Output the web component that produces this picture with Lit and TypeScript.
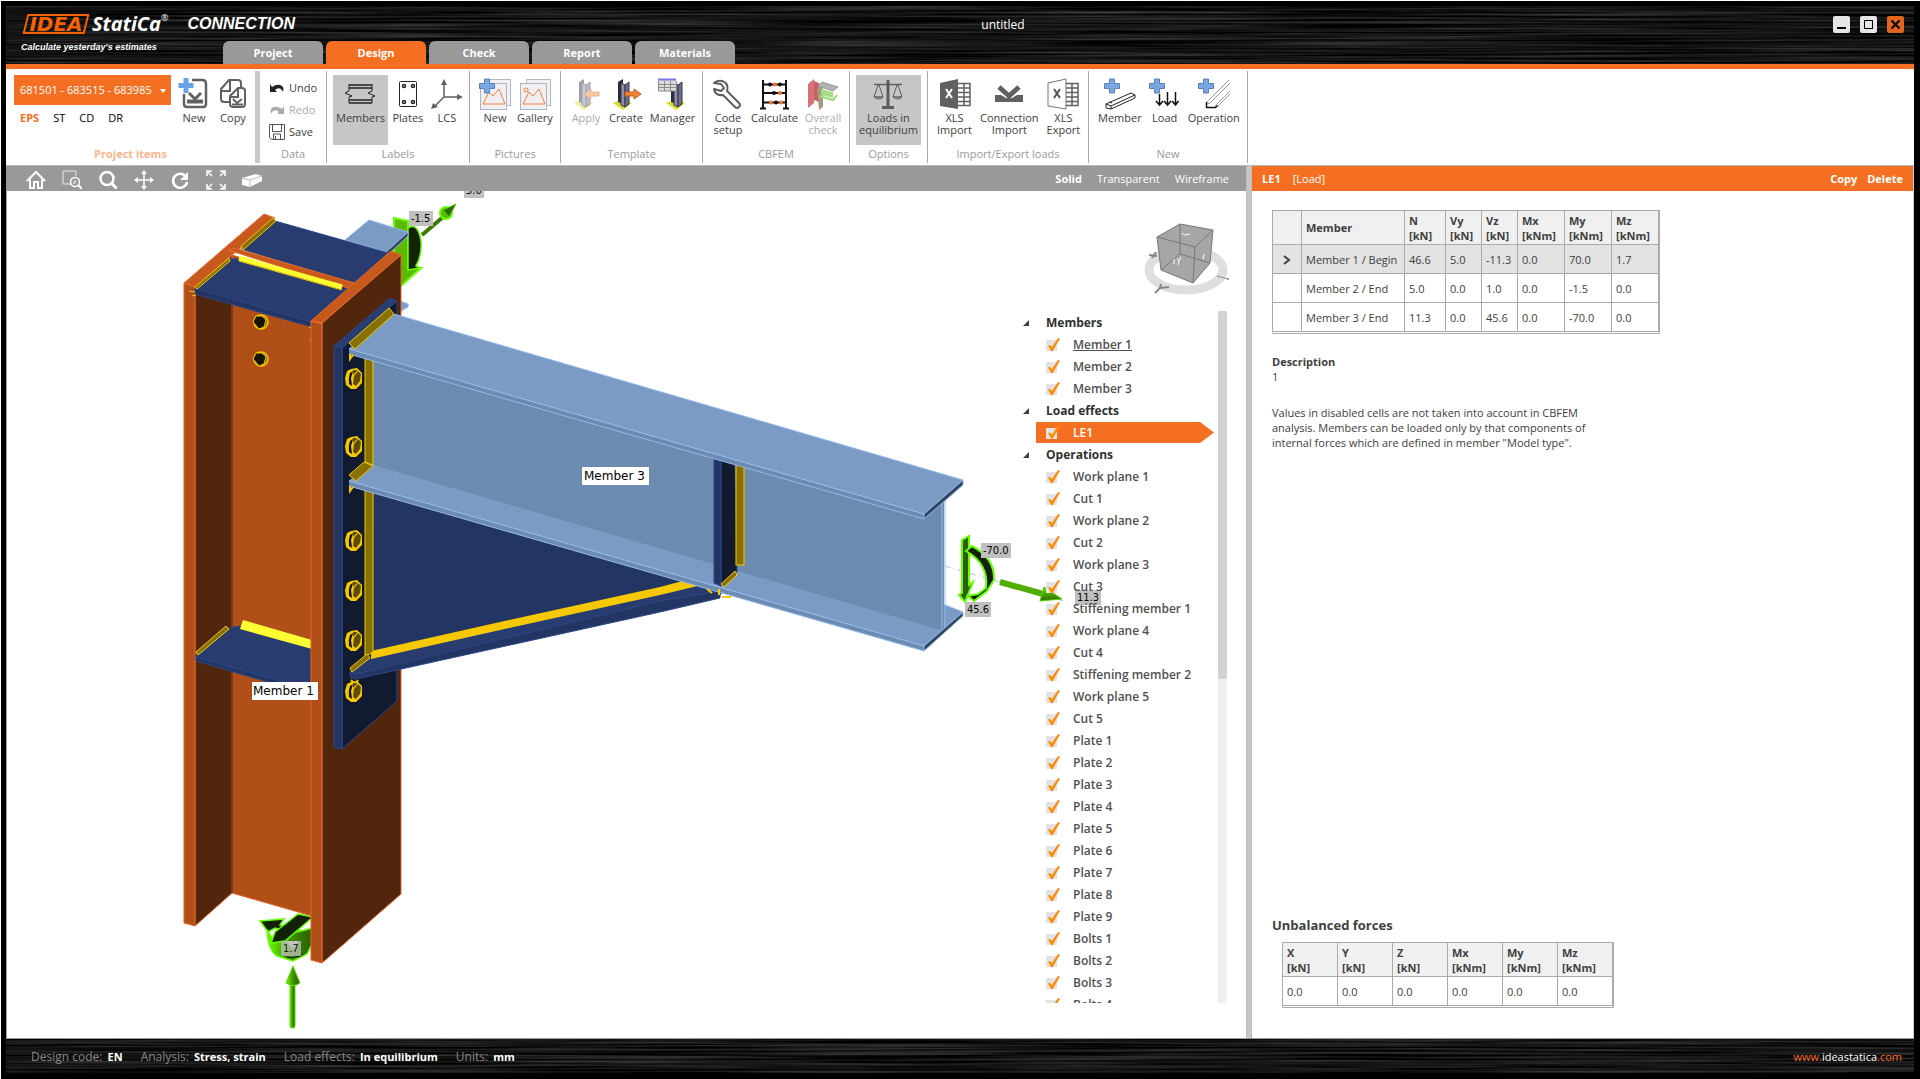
import { LitElement, html, svg, css, nothing, TemplateResult } from "lit";
import { customElement, state } from "lit/decorators.js";
import { classMap } from "lit/directives/class-map.js";

type Icon = TemplateResult;

const icon = (body: unknown, w = 32, h = 32): Icon =>
  html`<svg width=${w} height=${h} viewBox="0 0 ${w} ${h}" fill="none" aria-hidden="true">${body}</svg>`;

const bluePlus = svg`<path d="M5.500 1h5v4.500h5v5h-5v4.500h-5v-4.500h-5v-5h5z" fill="#7aa7df" stroke="#5580bd"/>`;
const column = svg`
  <path d="M8 25l10-4 9 4-9 7z" fill="#d8dc30"/>
  <path d="M13 4l5-3v25l-5-2z" fill="#2a2c3c"/>
  <path d="M16 5l4 2v22l-4-2z" fill="#8d8fa8" stroke="#34364a"/>
  <path d="M20 7l4-3v22l-4 3z" fill="#6c6e8a" stroke="#34364a"/>`;
const picture = svg`
  <rect x="7.500" y="1.500" width="24" height="26" fill="#f2f2f4" stroke="#b4b8c4"/>
  <rect x="1.500" y="5.500" width="26" height="26" fill="#f0f0f2" stroke="#aeb4c2"/>
  <path d="M4 26l6-12 4 4 6-7 6 15z" stroke="#f5803c"/>`;
const grid = svg`<path d="M19 5.500h12v22h-12M19 10h12M19 14.500h12M19 19h12M19 23.500h12M25 5v22" stroke="#606060" stroke-width="1.500"/>`;

const icons: Record<string, Icon> = {
  projectNew: icon(svg`
    <path d="M14 2h10q4 0 4 4v20q0 3-3 3H9q-3 0-3-3V16" stroke="#606060" stroke-width="2.500"/>
    <path d="M9 23.500h16" stroke="#606060" stroke-width="4"/><path d="M11 15l6 6 6-6" stroke="#606060" stroke-width="3"/>
    <path d="M5.500 0h5v5h5v5h-5v5h-5v-5h-5v-5h5z" fill="#6aa2e8"/>`),
  projectCopy: icon(svg`
    <path d="M13 24H7q-3 0-3-3V11l8-9h9q3 0 3 3v4M4 13h9V2" stroke="#606060" stroke-width="2"/>
    <path d="M21 10h4q3 0 3 3v13q0 3-3 3H16q-3 0-3-3v-8zM13 19h8v-9" stroke="#606060" stroke-width="2"/>
    <path d="M15 26.500h11M16 21l4 4 5-4" stroke="#606060" stroke-width="2"/>`),
  members: icon(svg`
    <path d="M5 7h23M5 10h23M5 22h23M5 25h23" stroke="#222" stroke-width="1.500"/>
    <path d="M5 6v7l-4 2 7 3-3 1v6M28 6v7l-4 2 7 3-3 1v6" stroke="#222"/>`),
  plates: icon(svg`
    <rect x="7.500" y="3.500" width="17" height="25" stroke="#222" rx="1"/>
    <g stroke="#222" stroke-width="1.500"><circle cx="12" cy="8" r="1.500"/><circle cx="21" cy="8" r="1.500"/><circle cx="12" cy="24" r="1.500"/><circle cx="21" cy="24" r="1.500"/></g>`),
  lcs: icon(svg`
    <path d="M13 5v14h14M13 19L4 28" stroke="#606060" stroke-width="1.500"/>
    <path d="M10 7l3-6 3 6zM26 16l6 3-6 3zM2 25l5 4-7 2z" fill="#606060"/>`),
  pictureNew: icon(svg`${picture}${bluePlus}`),
  gallery: icon(svg`${picture}<circle cx="7" cy="12" r="2" stroke="#f5803c"/>`),
  apply: icon(svg`<g opacity=".45"><g transform="translate(-4 0)">${column}</g><path d="M29 14v4h-8v3l-7-5 7-5v3z" fill="#f58030" stroke="#c05a20"/></g>`),
  create: icon(svg`<g transform="translate(-5 0)">${column}</g><path d="M15 14v4h9v3l7-5-7-5v3z" fill="#f08438" stroke="#c05a20"/>`),
  manager: icon(svg`<g transform="translate(1 0)">${column}</g>
    <rect x="1" y="1" width="18" height="12" fill="#ddd"/>
    <path d="M1 1.500h18" stroke="#7a78e0" stroke-width="2"/><path d="M1.500 3v10h18V3M1 6.500h18M1 9.500h18M7.500 3v10M13.500 3v10" stroke="#8a8a8a"/>`),
  wrench: icon(svg`<path d="M2 4l7 1 3 4-3 3-7-2q1 7 9 6l12 12q2 2 4 0t0-4L15 12q2-8-5-10-5-1-8 2z" stroke="#5e5e5e" stroke-width="2" stroke-linejoin="round" transform="translate(0 1)"/>`),
  abacus: icon(svg`
    <path d="M5 2v29M28 2v29M2 30.500h6M25 30.500h6M5 6.500h23M5 15h23M5 24.500h23" stroke="#111" stroke-width="2"/>
    <g fill="#111"><circle cx="12" cy="6.500" r="2"/><circle cx="22" cy="6.500" r="2"/><circle cx="16" cy="15" r="2"/><circle cx="18" cy="24.500" r="2"/></g>
    <g fill="#f56f22"><circle cx="17" cy="6.500" r="2"/><circle cx="22" cy="15" r="2"/><circle cx="13" cy="24.500" r="2"/><circle cx="23" cy="24.500" r="2"/></g>`),
  overall: icon(svg`
    <path d="M1 6l6-5v24l-6 5z" fill="#d87078"/><path d="M7 3l5 2v19l-5-2z" fill="#c86068"/>
    <path d="M10 10l6-3v22l-4 3z" fill="#a89880"/>
    <path d="M11 8l4-4 16 5-5 4z" fill="#b0b4b0" stroke="#989c98"/><path d="M14 11l12 3v6l-12-3z" fill="#a8dc88"/><path d="M12 18l14 4 4-5" stroke="#98d870" stroke-width="2"/>`),
  scale: icon(svg`
    <path d="M2 6.500h28" stroke="#5c5c5c" stroke-width="1.500"/><path d="M16 2v27" stroke="#5c5c5c" stroke-width="3"/><path d="M10 29.500h12" stroke="#5c5c5c" stroke-width="3"/>
    <path d="M6 7l-4 12h9L7 7M25 7l-4 12h9L26 7" stroke="#5c5c5c"/><path d="M2 19h9q-4 4-9 0zM21 19h9q-4 4-9 0z" stroke="#5c5c5c" fill="#aaa"/>`),
  xlsImport: icon(svg`<path d="M1 5l18-4v30L1 28z" fill="#606060"/>${grid}<path d="M7 11l6 9M13 11l-6 9" stroke="#fff" stroke-width="2"/>`),
  connImport: icon(svg`<path d="M2 17h6l5 3h6l5-3h6v7H2z" fill="#606060"/><path d="M6 9l10 9 10-9" stroke="#606060" stroke-width="5"/>`),
  xlsExport: icon(svg`<path d="M1 5l18-4v30L1 28z" stroke="#777" fill="#fff"/>${grid}<path d="M7 11l6 9M13 11l-6 9" stroke="#555" stroke-width="2"/>`),
  addMember: icon(svg`${bluePlus}<path d="M2 26l25-11 4 2v3L7 31l-5-1zM2 26l5 2 24-11M7 28v3M5 24l3 1" stroke="#222"/>`),
  addLoad: icon(svg`${bluePlus}<path d="M10.500 16v11M18.500 14v13M26.500 14v13M7 23l3.500 4 3.500-4M15 23l3.500 4 3.500-4M23 23l3.500 4 3-4" stroke="#111" stroke-width="1.500"/>`),
  addOperation: icon(svg`${bluePlus}<path d="M9 24L31 2M9 26l3-1L32 5M19 29l13-13M17 28l15-15" stroke="#999"/><path d="M8.500 24v5.500h9l2-2" stroke="#111" stroke-width="1.500"/>`),
  undo: icon(svg`<path d="M1 4v8h7L6 10q3-3 6-1 2 2 1 3 3-3 0-6Q9 3 3 7z" fill="#222"/>`, 16, 16),
  redo: icon(svg`<path d="M15 4v8H8l2-2q-3-3-6-1-2 2-1 3-3-3 0-6 4-3 10 1z" fill="#aaa"/>`, 16, 16),
  save: icon(svg`<path d="M.5.500h15v15H3l-2.500-2zM3.500.500v7h9v-7M4.500 15v-5h7v5M6.500 12v3" stroke="#555"/>`, 16, 16),
};

const viewTools: { label: string; icon: Icon }[] = [
  { label: "Home", icon: icon(svg`<path d="M1 11L10 2l9 9M4 9v9h4v-6h4v6h4V9" stroke="#fff" stroke-width="2"/>`, 20, 20) },
  { label: "Zoom window", icon: icon(svg`<path d="M10 14H1V1h13v5" stroke="#e8e8e8"/><circle cx="13" cy="12" r="4.500" stroke="#fff" stroke-width="1.500"/><path d="M16 15l4 4" stroke="#fff" stroke-width="2"/><path d="M13 10v3h-2" stroke="#fff"/>`, 20, 20) },
  { label: "Zoom", icon: icon(svg`<circle cx="9" cy="8.500" r="6.500" stroke="#fff" stroke-width="2.500"/><path d="M13.500 13l5 5.500" stroke="#fff" stroke-width="3"/>`, 20, 20) },
  { label: "Pan", icon: icon(svg`<path d="M10 2v16M2 10h16" stroke="#fff" stroke-width="1.500"/><path d="M7 4l3-4 3 4zM7 16l3 4 3-4zM4 7l-4 3 4 3zM16 7l4 3-4 3z" fill="#fff"/>`, 20, 20) },
  { label: "Rotate", icon: icon(svg`<path d="M16 7a7 7 0 1 0 1 5" stroke="#fff" stroke-width="2.500"/><path d="M18 2v8h-8z" fill="#fff"/>`, 20, 20) },
  { label: "Fit", icon: icon(svg`<path d="M1 6V1h5M1 1l5 5M14 1h5v5M19 1l-5 5M1 14v5h5M1 19l5-5M14 19h5v-5M19 19l-5-5" stroke="#fff" stroke-width="1.500"/>`, 20, 20) },
  { label: "Clipping box", icon: icon(svg`<path d="M0 8l14-4 6 2v5L8 17l-8-2z" fill="#fff"/><path d="M0 8l8 2 12-4M8 10v7" stroke="#bbb"/>`, 20, 20) },
];

interface Tool { label: string; icon: string; active?: boolean; disabled?: boolean }
interface Group { title: string; size: string; tools: Tool[] }

const groups: Group[] = [
  { title: "Labels", size: "w-labels", tools: [{ label: "Members", icon: "members", active: true }, { label: "Plates", icon: "plates" }, { label: "LCS", icon: "lcs" }] },
  { title: "Pictures", size: "w-pictures", tools: [{ label: "New", icon: "pictureNew" }, { label: "Gallery", icon: "gallery" }] },
  { title: "Template", size: "w-template", tools: [{ label: "Apply", icon: "apply", disabled: true }, { label: "Create", icon: "create" }, { label: "Manager", icon: "manager" }] },
  { title: "CBFEM", size: "w-cbfem", tools: [{ label: "Code setup", icon: "wrench" }, { label: "Calculate", icon: "abacus" }, { label: "Overall check", icon: "overall", disabled: true }] },
  { title: "Options", size: "w-options", tools: [{ label: "Loads in equilibrium", icon: "scale", active: true }] },
  { title: "Import/Export loads", size: "w-loads", tools: [{ label: "XLS Import", icon: "xlsImport" }, { label: "Connection Import", icon: "connImport" }, { label: "XLS Export", icon: "xlsExport" }] },
  { title: "New", size: "w-new", tools: [{ label: "Member", icon: "addMember" }, { label: "Load", icon: "addLoad" }, { label: "Operation", icon: "addOperation" }] },
];

const tree = [
  { title: "Members", items: ["Member 1", "Member 2", "Member 3"] },
  { title: "Load effects", items: ["LE1"] },
  {
    title: "Operations",
    items: [
      "Work plane 1", "Cut 1", "Work plane 2", "Cut 2", "Work plane 3", "Cut 3", "Stiffening member 1",
      "Work plane 4", "Cut 4", "Stiffening member 2", "Work plane 5", "Cut 5", "Plate 1", "Plate 2", "Plate 3",
      "Plate 4", "Plate 5", "Plate 6", "Plate 7", "Plate 8", "Plate 9", "Bolts 1", "Bolts 2", "Bolts 3", "Bolts 4",
    ],
  },
];

const loads = [
  ["Member 1 / Begin", "46.6", "5.0", "-11.3", "0.0", "70.0", "1.7"],
  ["Member 2 / End", "5.0", "0.0", "1.0", "0.0", "-1.5", "0.0"],
  ["Member 3 / End", "11.3", "0.0", "45.6", "0.0", "-70.0", "0.0"],
];
const loadHeads = [["N", "kN"], ["Vy", "kN"], ["Vz", "kN"], ["Mx", "kNm"], ["My", "kNm"], ["Mz", "kNm"]];
const sumHeads = [["X", "kN"], ["Y", "kN"], ["Z", "kN"], ["Mx", "kNm"], ["My", "kNm"], ["Mz", "kNm"]];

/** Horizontal brushed-metal texture behind the title and status bars. */
const brushed = (seed: number) => html`
  <svg class="brushed" aria-hidden="true" width="100%" height="100%">
    <filter id="brush${seed}" x="0" y="0" width="100%" height="100%" color-interpolation-filters="sRGB">
      <feTurbulence type="fractalNoise" baseFrequency="0.004 0.5" numOctaves="3" seed=${seed} />
      <feColorMatrix values="0.4 0 0 0 -0.12  0.4 0 0 0 -0.12  0.4 0 0 0 -0.12  0 0 0 0 1" />
    </filter>
    <rect width="100%" height="100%" filter="url(#brush${seed})" />
  </svg>`;

@customElement("scene-view")
class SceneView extends LitElement {
  static styles = css`
    :host { display: block; overflow: hidden; }
    svg { display: block; width: 100%; height: 100%; }
    .o { fill: #b04f18; stroke: #e0672a; }
    .ot { fill: #c8591c; stroke: #e8692a; }
    .od { fill: #52260d; stroke: #e0672a; }
    .n { fill: #293c70; stroke: #2c4788; }
    .nf { fill: #233563; stroke: #2c4788; }
    .nd { fill: #121a30; stroke: #2c4788; }
    .b { fill: #7b9bc5; stroke: #94b8f0; }
    .bw { fill: #6d8bae; stroke: none; }
    .bd { fill: #34465c; stroke: #94b8f0; }
    .bl { fill: none; stroke: #94b8f0; }
    .y { fill: #f5c800; }
    .yy { fill: #ffff32; }
    .yd { fill: #857000; stroke: #f5c800; }
    .g { fill: #5cb800; stroke: #66ff00; stroke-width: 2; }
    .gm { fill: #2f5f00; stroke: #66ff00; stroke-width: 2; }
    .gd { fill: #142204; stroke: #66ff00; stroke-width: 1.500; }
    .tag { fill: #c0c0c0; }
    .val { font: 11px "DejaVu Sans Condensed", "DejaVu Sans", sans-serif; fill: #000; }
    .name { font: 12px "DejaVu Sans", sans-serif; fill: #000; }
  `;

  private bolt(y: number) {
    return svg`<g transform="translate(354 ${y})">
      <path d="M-3-10L3-11 8-6 8 4 2 10-3 10-8 6-9-1-7-8z" fill="#f5c800"/>
      <path d="M-4-6L-1-8l-2 7 1 8-3-2q-1-6 1-11z" fill="#15120a"/>
      <path d="M0-3l4-5 3 3-1 7-4 5-3-2z" fill="#5c4d00"/>
      <path d="M-1-9l4 0 0 1-4 4z" fill="#5c4d00"/></g>`;
  }
  private nut(y: number) {
    return svg`<g transform="translate(260 ${y})"><ellipse cx="1" rx="7" ry="7" fill="#857000" stroke="#f5c800" stroke-width="1.500"/>
      <path d="M-7 0l3-6h6l4 4-2 7-5 2z" fill="#181400" stroke="#f5c800"/></g>`;
  }
  private tag(x: number, y: number, w: number, t: string) {
    return svg`<rect class="tag" x=${x} y=${y} width=${w} height="15"/><text class="val" x=${x + 2} y=${y + 11}>${t}</text>`;
  }

  render() {
    return html`<svg viewBox="7 191 1239 847" preserveAspectRatio="xMinYMin slice" role="img" aria-label="Steel joint model">
      <defs>
        <linearGradient id="gv" x1="0" x2="1"><stop offset="0" stop-color="#66ff00"/><stop offset=".5" stop-color="#3f9000"/><stop offset="1" stop-color="#2c5a00"/></linearGradient>
        <linearGradient id="gh" x1="0" x2="0" y2="1"><stop offset="0" stop-color="#66e000"/><stop offset="1" stop-color="#2f6a00"/></linearGradient>
      </defs>

      <polygon class="g" points="394,218 408,221 408,268 421,268 402,285 394,290"/>
      <path class="gd" d="M408 228Q418 222 421 241 422 256 416 266L420 268 408 270z"/>
      <path d="M422 235L443 217" stroke="#3c7c00" stroke-width="4"/>
      <ellipse class="g" cx="446" cy="213" rx="6" ry="6"/>
      <polygon points="456,204 443,210 449,217" fill="#2f6a00" stroke="#55d000"/>
      <polygon class="b" points="345,240 369,220 408,232 386,252"/>
      <polygon class="bd" points="408,232 408,236 389,254 386,252"/>
      <polygon class="b" points="400,301 408,304 408,307 400,312"/>
      <polygon class="bd" points="408,304 408,306 401,311"/>
      ${this.tag(409, 211, 24, "-1.5")}
      ${this.tag(464, 183, 20, "5.0")}

      <polygon class="gd" points="260,921 284,919 280,925 313,934 313,940 275,928 268,932"/>
      <path d="M267 930Q268 950 277 956L293 961 307 954 313 942V928L293 933 275 943z" fill="url(#gv)" stroke="#66ff00" stroke-width="1.500"/>
      <path d="M281 955Q292 960 305 953L300 957 288 958z" fill="#142204"/>
      <polygon class="gd" points="298,914 313,917 285,941 271,943 275,932"/>
      <polygon points="285,941 299,941 293,949" fill="#ddd" opacity=".8"/>
      <g opacity=".75">${this.tag(281, 941, 20, "1.7")}</g>
      <rect x="290" y="984" width="5" height="44" rx="2" fill="url(#gv)" stroke="#5ae000"/>
      <path d="M293 966l7 17q-7 5-14 0z" fill="url(#gv)" stroke="#5ae000"/>

      <polygon class="od" points="195,287 232,255 232,893 195,926"/>
      <polygon class="o" points="232,255 312,280 312,916 232,893"/>
      <path d="M232 300V893" stroke="#3c1c0a"/>
      <polygon class="o" points="184,283 195,287 195,926 184,923"/>
      <polygon class="ot" points="184,283 264,214 275,218 195,287"/>
      <polygon class="n" points="275,221 388,253 355,284 241,249"/>
      <polygon class="n" points="195,288 230,259 238,259 352,288 312,322"/>
      <polygon class="ot" points="228,250 234,248 358,284 351,289"/>
      <polygon class="nf" points="195,288 312,322 312,327 195,294"/>
      <path d="M239 258L342 287" stroke="#ffff32" stroke-width="5"/>
      <path d="M239 261L342 290" stroke="#f5c800"/>
      <polygon class="yd" points="241,246 273,218 276,221 243,250"/>
      <polygon class="yd" points="195,287 229,258 230,261 197,289"/>
      <path d="M189 291l6 1M192 296l4-1M311 323l6 3M309 327l4 2M311 338v3M311 375v2" stroke="#f5c800"/>
      ${this.nut(322)}${this.nut(359)}
      <polygon class="n" points="196,655 228,628 240,626 312,648 312,690 196,657"/>
      <polygon class="nf" points="196,657 312,690 312,695 196,661"/>
      <polygon class="yd" points="196,652 226,626 229,629 198,655"/>
      <polygon class="yy" points="243,620 312,640 312,649 240,629"/>
      <polygon class="od" points="322,323 401,254 401,894 322,963"/>
      <polygon class="o" points="311,321 322,324 322,963 311,960"/>
      <polygon class="ot" points="311,321 391,251 401,255 322,323"/>

      <polygon class="nd" points="342,348 397,301 397,701 342,749"/>
      <polygon class="nf" points="334,346 342,348 342,749 334,747"/>
      <polygon class="n" points="334,346 390,298 397,301 342,348"/>

      <polygon class="nf" points="373,485 720,585 704,586 371,655"/>
      <polygon class="n" points="350,673 371,658 500,630 690,584 722,592 720,595 660,602 356,675"/>
      <polygon class="nf" points="350,671 356,674 660,601 720,591 720,598 660,612 356,679 350,677"/>
      <polygon class="y" points="371,651 500,622 660,587 690,579 706,584 660,595 500,630 371,659"/>
      <polygon class="yd" points="365,485 373,488 373,652 365,657"/>
      <polygon class="yd" points="350,668 367,654 370,658 352,672"/>

      <polygon class="b" points="349,481 373,465 945,605 963,612 924,646"/>
      <polygon class="bw" points="373,350 944,498 944,631 373,465"/>
      <path class="bl" d="M942 500V631M945 497V630"/>
      <polygon class="bw" points="349,481 924,646 924,651 349,486"/>
      <path class="bl" d="M349 481L924 646M349 486L924 651"/>
      <polygon class="bd" points="924,646 963,612 963,616 924,651"/>
      <polygon class="yd" points="365,357 373,355 373,465 365,462"/>

      <polygon class="nd" points="721,460 735,464 737,572 721,586"/>
      <polygon class="nf" points="714,458 721,460 721,586 714,583"/>
      <rect class="yd" x="736" y="464" width="8" height="101"/>
      <polygon class="yd" points="721,584 735,571 737,575 724,587"/>
      <path d="M707 589l5 4M719 589v6M722 597h9" stroke="#f5c800" stroke-width="2"/>

      <polygon class="b" points="394,314 963,480 924,514 349,349"/>
      <polygon class="bw" points="349,349 924,514 924,519 349,354"/>
      <path class="bl" d="M349 349L924 514M349 354L924 519"/>
      <polygon class="bd" points="924,514 963,480 963,485 924,519"/>
      <polygon class="yd" points="349,343 389,308 394,314 355,349"/>
      <polygon class="yd" points="349,475 364,462 373,466 356,481"/>
      <path d="M350 354v5l3-4M350 486v5l3-4M351 680l4 4 3-4" stroke="#f5c800" stroke-width="2" fill="none"/>
      ${[379, 447, 541, 591, 641, 692].map((y) => this.bolt(y))}

      <path d="M945 566L1064 601" stroke="#a8c0e0" stroke-dasharray="6 3 1 3"/>
      <polygon class="gm" points="962,540 969,536 969,585 973,582 965,602 959,595 962,593"/>
      <path d="M972 546Q995 558 994 580L987 591 974 601 968 596 978 594 986 588Q989 564 966 551z" fill="#142204" stroke="#66ff00" stroke-width="2"/>
      <path d="M1000 582L1043 594" stroke="#4fae00" stroke-width="6"/>
      <polygon points="1044,587 1062,599 1040,601" fill="url(#gh)" stroke="#55d000"/>
      ${this.tag(981, 543, 30, "-70.0")}
      ${this.tag(965, 602, 26, "45.6")}
      ${this.tag(1075, 590, 26, "11.3")}

      <rect x="582" y="467" width="67" height="18" fill="#fff"/><text class="name" x="584" y="480">Member 3</text>
      <rect x="252" y="682" width="66" height="18" fill="#fff"/><text class="name" x="253" y="695">Member 1</text>

      <ellipse cx="1186" cy="270" rx="37" ry="20" fill="none" stroke="#dedede" stroke-width="9"/>
      <g stroke="#777" fill="#a6a6a6">
        <polygon points="1157,237 1180,224 1213,230 1210,263 1193,283 1161,270" stroke-linejoin="round"/>
        <path d="M1157 237L1195 247 1213 230M1195 247L1193 283M1180 224V254L1161 270M1180 254L1210 263" fill="none"/>
      </g>
      <path d="M1182 233l3 2 5-1M1174 259v5M1177 258l2 3 2-4M1179 261l-1 4M1204 254l-1 5" stroke="#fff" fill="none"/>
      <path d="M1155 293l5-5 1-4M1160 288l9-1M1149 255l8 1M1152 258l4-6" stroke="#888" stroke-width="2" fill="none"/>
      <path d="M1217 276l11 3" stroke="#888"/><circle cx="1228" cy="279" r="1" fill="#888"/>
    </svg>`;
  }
}

@customElement("app-root")
class AppRoot extends LitElement {
  @state() private tab = "Design";
  @state() private mode = "Solid";
  @state() private selected = "LE1";

  static styles = css`
    :host { display: block; font: 11px/14px "Open Sans", "Noto Sans", sans-serif; color: #404040; }
    * { box-sizing: border-box; }
    button { font: inherit; color: inherit; background: none; border: 0; padding: 0; cursor: pointer; }
    svg { display: block; flex: none; }
    ul { list-style: none; margin: 0; padding: 0; }
    h2, h3, p { margin: 0; font-size: inherit; }
    .window { display: flex; flex-direction: column; height: 100vh; background: #000; border-top: 1px solid #fff; border-left: 1px solid #fff; padding: 5px 6px 6px 5px; }

    .title-bar, .status { position: relative; background: #111; color: #fff; flex: none; overflow: hidden; }
    .brushed { position: absolute; inset: 0; }
    .title-bar { height: 58px; display: grid; grid-template: 35px 23px / 217px 1fr auto; }
    .title-bar > :not(.brushed), .status > :not(.brushed) { position: relative; }
    .brand { grid-row: 1; grid-column: 1 / 3; display: flex; align-items: center; padding: 0 0 0 17px; font-style: italic; font-weight: 700; }
    .idea { position: relative; display: block; width: 66px; height: 20px; color: #f56200; font: italic 700 20px/20px "DejaVu Sans", sans-serif; text-align: center; }
    .idea::before { content: ""; position: absolute; inset: 0 2px; border: 2px solid #f56200; transform: skewX(-14deg); }
    .statica { font-size: 20px; line-height: 24px; margin-left: 3px; display: flex; }
    .reg { font-size: 9px; line-height: 12px; font-weight: 400; }
    .product { font: italic 700 16px/24px "Liberation Sans", sans-serif; margin-left: 19px; }
    .doc { grid-row: 1; grid-column: 2; justify-self: center; align-self: center; font-size: 12px; padding: 2px 50px 0 0; }
    .win-buttons { grid-row: 1; grid-column: 3; display: flex; gap: 10px; align-items: center; padding: 2px 10px 0 0; }
    .win-buttons button { width: 17px; height: 17px; border-radius: 2px; background: #e6e6e6; }
    .win-buttons .close { background: #e0641e; }
    .tagline { grid-row: 2; grid-column: 1; font: italic 700 9px/12px "Liberation Sans", sans-serif; padding-left: 15px; white-space: nowrap; }
    .tabs { grid-row: 2; grid-column: 2 / 4; display: flex; gap: 3px; }
    .tabs button { width: 100px; border-radius: 6px 6px 0 0; background: #999; font-weight: 700; }
    .tabs button.on { background: #f56f22; }

    .ribbon { background: #fff; border-top: 5px solid #f56f22; border-bottom: 1px solid #bbb; display: flex; height: 102px; flex: none; padding: 2px 0; }
    .group { display: flex; flex-direction: column; border-right: 1px solid #aaa; flex: none; }
    .group h2 { margin-top: auto; padding-bottom: 2px; text-align: center; font-weight: 400; color: #999; }
    .tools { display: flex; padding: 4px 0 0 6px; }
    .tool { display: flex; flex-direction: column; align-items: center; gap: 2px; height: 70px; padding: 3px 3px 0; line-height: 12px; text-align: center; }
    .tool.active { background: #c6c6c6; }
    .tool:disabled { color: #aaa; }
    .project { width: 254px; border-right: 5px solid #c8c8c8; }
    .project h2 { color: #f8b48c; font-weight: 700; }
    .project-row { display: flex; padding: 4px 0 0 8px; gap: 7px; }
    .items { display: flex; flex-direction: column; gap: 6px; width: 157px; }
    .pick { position: relative; display: block; }
    .pick select { appearance: none; width: 100%; height: 30px; border: 0; border-radius: 0; padding: 0 6px; background: #f56f22; color: #fff; font: inherit; display: block; }
    .pick svg { position: absolute; right: 5px; top: 14px; pointer-events: none; }
    .kinds { display: flex; gap: 14px; padding-left: 6px; color: #000; }
    .kinds .on { color: #f56f22; font-weight: 700; }
    .project .tool { padding: 3px 0 0; width: 32px; }
    .data { width: 67px; }
    .data-list { display: flex; flex-direction: column; padding: 6px 0 0 9px; }
    .data-list button { display: flex; align-items: center; gap: 4px; height: 22px; }
    .data-list button:disabled { color: #aaa; }
    .w-labels { width: 143px; } .w-pictures { width: 91px; } .w-template { width: 142px; } .w-cbfem { width: 147px; }
    .w-options { width: 78px; } .w-loads { width: 161px; } .w-new { width: 159px; }
    .w-labels .tools, .w-template .tools, .w-cbfem .tools, .w-new .tools { gap: 1px; }
    .w-loads .tools { gap: 2px; }

    .main { flex: 1; min-height: 0; display: grid; grid-template-columns: minmax(0, 1240fr) 6px minmax(0, 662fr); background: #fff; border-bottom: 1px solid #999; }
    .splitter { background: #c8c8c8; border: solid #bbb; border-width: 0 1px; }
    .view { position: relative; display: flex; flex-direction: column; min-height: 0; border-left: 1px solid #999; }
    .view-bar { background: #999; height: 25px; flex: none; display: flex; align-items: center; padding: 0 17px 0 19px; color: #fff; }
    .view-tools { display: flex; gap: 16px; padding-top: 3px; }
    .modes { display: flex; gap: 15px; margin-left: auto; }
    .modes .on { font-weight: 700; }
    .scene { flex: 1; min-height: 0; }
    .tree { position: absolute; right: 19px; top: 145px; bottom: 35px; width: 210px; overflow: hidden; border-right: 9px solid #f0f0f0; padding-top: 1px; font-size: 12px; font-weight: 600; color: #505050; }
    .thumb { position: absolute; right: 19px; top: 145px; width: 9px; height: 368px; background: #d2d2d2; border-radius: 2px; }
    .tree h3 { display: flex; align-items: center; gap: 17px; height: 22px; padding-left: 6px; color: #303030; }
    .node { display: flex; align-items: center; gap: 13px; height: 22px; padding-left: 29px; }
    .node input { appearance: none; position: relative; margin: 0; width: 14px; height: 14px; background: linear-gradient(#e2e2e2, #e2e2e2) 0 2px / 11px 11px no-repeat; }
    .node input:checked::before { content: ""; position: absolute; inset: 0; background: #ff8c00; clip-path: polygon(14% 52%, 32% 52%, 42% 66%, 86% 0, 100% 6%, 46% 94%, 36% 94%); }
    .node.on { color: #fff; height: 21px; margin: 0 4px 1px 19px; padding-left: 10px; background: #f56f22; clip-path: polygon(0 0, calc(100% - 14px) 0, 100% 50%, calc(100% - 14px) 100%, 0 100%); }
    .underlined { text-decoration: underline; }

    .panel { display: flex; flex-direction: column; min-width: 0; border-right: 1px solid #ccc; }
    .panel-bar { background: #f56f22; color: #fff; height: 25px; flex: none; display: flex; align-items: center; gap: 12px; padding: 0 10px; }
    .panel-bar .end { margin-left: auto; display: flex; gap: 10px; font-weight: 700; }
    .panel-body { flex: 1; display: flex; flex-direction: column; align-items: flex-start; padding: 19px 20px 30px; }
    table { border-collapse: collapse; }
    .frame { border: solid #aaa; border-width: 0 1px 1px 0; padding: 0 0 1px 0; }
    th, td { border: 1px solid #aaa; padding: 0 4px; text-align: left; height: 29px; white-space: nowrap; }
    td { padding-top: 2px; }
    th { background: #f0f0f0; height: 34px; line-height: 15px; font-weight: 700; }
    .picked td { background: #e2e2e2; }
    .c-mark { width: 29px; } .c-member { width: 103px; } .c-n { width: 41px; } .c-v { width: 36px; } .c-m { width: 47px; }
    .fixed { table-layout: fixed; }
    .loads { width: 387px; } .sums { width: 331px; }
    .desc { margin-top: 20px; line-height: 15px; }
    .note { margin-top: 21px; line-height: 15px; max-width: 335px; }
    .unbalanced { margin-top: auto; }
    .unbalanced h3 { font-size: 13px; line-height: 18px; padding-bottom: 8px; }
    .indent { margin-left: 10px; }
    .mark { margin-left: 6px; }

    .status { height: 34px; display: flex; align-items: center; gap: 18px; padding: 1px 12px 0 25px; color: #888; font-size: 12px; }
    .status b { color: #fff; margin-left: 2px; font-size: 11px; }
    .status a { margin-left: auto; color: #f56f22; text-decoration: none; font-size: 11px; }
    .status a span { color: #fff; }
  `;

  private tool(t: Tool) {
    const cut = t.label.lastIndexOf(" ");
    return html`<button class=${classMap({ tool: true, active: !!t.active })} ?disabled=${!!t.disabled}>
      ${icons[t.icon]}<span>${cut > 0 ? html`${t.label.slice(0, cut)}<br />${t.label.slice(cut + 1)}` : t.label}</span>
    </button>`;
  }

  private head([name, unit]: string[]) {
    return html`<th scope="col">${name}<br />[${unit}]</th>`;
  }

  private node(name: string) {
    const on = name === this.selected;
    const id = name.replace(/ /g, "-");
    return html`<li class=${classMap({ node: true, on })} @click=${() => (this.selected = name)}>
      <input type="checkbox" id=${id} checked /><label for=${id} class=${name === "Member 1" ? "underlined" : ""}>${name}</label>
    </li>`;
  }

  render() {
    return html`<div class="window">
      <header class="title-bar">
        ${brushed(4)}
        <div class="brand">
          <span class="idea">IDEA</span><span class="statica">StatiCa<span class="reg">®</span></span><span class="product">CONNECTION</span>
        </div>
        <div class="doc">untitled</div>
        <div class="win-buttons">
          <button aria-label="Minimize">${icon(svg`<path d="M4 12h9" stroke="#000" stroke-width="2"/>`, 17, 17)}</button>
          <button aria-label="Maximize">${icon(svg`<rect x="4.500" y="4.500" width="8" height="8" stroke="#000"/>`, 17, 17)}</button>
          <button class="close" aria-label="Close">${icon(svg`<path d="M4.500 4.500l8 8M12.500 4.500l-8 8" stroke="#000" stroke-width="2"/>`, 17, 17)}</button>
        </div>
        <div class="tagline">Calculate yesterday's estimates</div>
        <nav class="tabs">
          ${["Project", "Design", "Check", "Report", "Materials"].map(
            (t) => html`<button class=${t === this.tab ? "on" : ""} @click=${() => (this.tab = t)}>${t}</button>`
          )}
        </nav>
      </header>

      <section class="ribbon">
        <div class="group project">
          <div class="project-row">
            <div class="items">
              <label class="pick"><select aria-label="Project item"><option>681501 - 683515 - 683985</option></select>
                <svg width="6" height="4" viewBox="0 0 6 4"><path d="M0 0h6L3 4z" fill="#fff" /></svg></label>
              <div class="kinds"><button class="on">EPS</button><button>ST</button><button>CD</button><button>DR</button></div>
            </div>
            ${this.tool({ label: "New", icon: "projectNew" })}${this.tool({ label: "Copy", icon: "projectCopy" })}
          </div>
          <h2>Project items</h2>
        </div>
        <div class="group data">
          <div class="data-list">
            <button>${icons.undo}Undo</button><button disabled>${icons.redo}Redo</button><button>${icons.save}Save</button>
          </div>
          <h2>Data</h2>
        </div>
        ${groups.map((g) => html`<div class="group ${g.size}"><div class="tools">${g.tools.map((t) => this.tool(t))}</div><h2>${g.title}</h2></div>`)}
      </section>

      <main class="main">
        <section class="view">
          <div class="view-bar">
            <div class="view-tools">${viewTools.map((t) => html`<button aria-label=${t.label}>${t.icon}</button>`)}</div>
            <div class="modes">
              ${["Solid", "Transparent", "Wireframe"].map((m) => html`<button class=${m === this.mode ? "on" : ""} @click=${() => (this.mode = m)}>${m}</button>`)}
            </div>
          </div>
          <scene-view class="scene"></scene-view>
          <div class="tree">
            ${tree.map(
              (b) => html`<h3>${icon(svg`<path d="M6 0v6H0z" fill="#404040"/>`, 6, 6)}${b.title}</h3><ul>${b.items.map((n) => this.node(n))}</ul>`
            )}
          </div>
          <div class="thumb"></div>
        </section>
        <div class="splitter"></div>
        <section class="panel">
          <div class="panel-bar"><b>LE1</b><span>[Load]</span><div class="end"><button>Copy</button><button>Delete</button></div></div>
          <div class="panel-body">
            <div class="frame"><table class="fixed loads">
              <colgroup><col class="c-mark" /><col class="c-member" /><col class="c-n" /><col class="c-v" /><col class="c-v" /><col class="c-m" /><col class="c-m" /><col class="c-m" /></colgroup>
              <thead><tr><th></th><th scope="col">Member</th>${loadHeads.map((h) => this.head(h))}</tr></thead>
              <tbody>${loads.map(
                (r, i) => html`<tr class=${i === 0 ? "picked" : ""}>
                  <td>${i === 0 ? html`<svg class="mark" width="8" height="10" viewBox="0 0 8 10"><path d="M1 1l5 4-5 4" fill="none" stroke="#404040" stroke-width="2" /></svg>` : nothing}</td>
                  ${r.map((c) => html`<td>${c}</td>`)}
                </tr>`
              )}</tbody>
            </table></div>
            <div class="desc"><b>Description</b><p>1</p></div>
            <p class="note">Values in disabled cells are not taken into account in CBFEM analysis. Members can be loaded only by that components of internal forces which are defined in member "Model type".</p>
            <div class="unbalanced">
              <h3>Unbalanced forces</h3>
              <div class="frame indent"><table class="fixed sums">
                <thead><tr>${sumHeads.map((h) => this.head(h))}</tr></thead>
                <tbody><tr>${sumHeads.map(() => html`<td>0.0</td>`)}</tr></tbody>
              </table></div>
            </div>
          </div>
        </section>
      </main>

      <footer class="status">
        ${brushed(9)}
        <span>Design code: <b>EN</b></span><span>Analysis: <b>Stress, strain</b></span><span>Load effects: <b>In equilibrium</b></span><span>Units: <b>mm</b></span>
        <a href="#">www.<span>ideastatica</span>.com</a>
      </footer>
    </div>`;
  }
}
